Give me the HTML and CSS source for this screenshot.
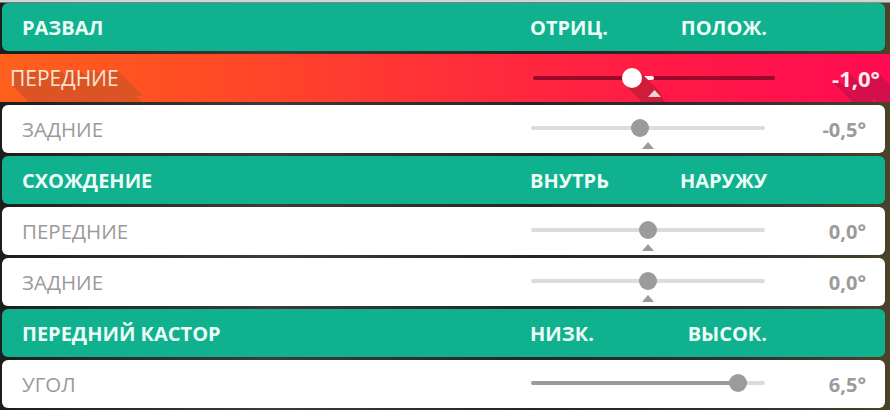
FILE: index.html
```html
<!DOCTYPE html>
<html lang="ru">
<head>
<meta charset="utf-8">
<title>Развал-схождение</title>
<link rel="stylesheet" href="styles.css">
</head>
<body>
<div class="panel">
  <div class="row head">
    <span class="name">РАЗВАЛ</span>
    <div class="cols"><span>ОТРИЦ.</span><span>ПОЛОЖ.</span></div>
  </div>
  <div class="row active">
    <span class="label">ПЕРЕДНИЕ</span>
    <div class="slider">
      <div class="track"></div>
      <div class="fill-white" style="left:40.9%;width:9.1%"></div>
      <div class="thumb" style="left:40.9%"></div>
      <svg class="marker" width="60" height="20" viewBox="0 0 60 20"><polygon points="6.5,0 13,7 26,20 13,20 0,7" fill="#d01a3a"/><polygon points="6.5,0 13,7 0,7" fill="#ead3d8"/></svg>
    </div>
    <span class="value">-1,0°</span>
  </div>
  <div class="row item">
    <span class="label">ЗАДНИЕ</span>
    <div class="slider">
      <div class="track"></div>
      <div class="thumb" style="left:46.6%"></div>
      <div class="tri"></div>
    </div>
    <span class="value">-0,5°</span>
  </div>
  <div class="row head">
    <span class="name">СХОЖДЕНИЕ</span>
    <div class="cols"><span>ВНУТРЬ</span><span>НАРУЖУ</span></div>
  </div>
  <div class="row item">
    <span class="label">ПЕРЕДНИЕ</span>
    <div class="slider">
      <div class="track"></div>
      <div class="thumb" style="left:50%"></div>
      <div class="tri"></div>
    </div>
    <span class="value">0,0°</span>
  </div>
  <div class="row item">
    <span class="label">ЗАДНИЕ</span>
    <div class="slider">
      <div class="track"></div>
      <div class="thumb" style="left:50%"></div>
      <div class="tri"></div>
    </div>
    <span class="value">0,0°</span>
  </div>
  <div class="row head">
    <span class="name">ПЕРЕДНИЙ КАСТОР</span>
    <div class="cols"><span>НИЗК.</span><span>ВЫСОК.</span></div>
  </div>
  <div class="row item">
    <span class="label">УГОЛ</span>
    <div class="slider">
      <div class="track"></div>
      <div class="fill-grey" style="width:88.5%"></div>
      <div class="thumb" style="left:88.5%"></div>
    </div>
    <span class="value">6,5°</span>
  </div>
</div>
</body>
</html>
```
FILE: styles.css
```css
* { box-sizing: border-box; }
html, body { margin: 0; padding: 0; }
body {
  width: 890px;
  height: 410px;
  overflow: hidden;
  font-family: "Open Sans", "Noto Sans", sans-serif;
  background:
    linear-gradient(180deg, #d4d4d4 0, #d4d4d4 2px, transparent 3px),
    linear-gradient(90deg, #1e1d1d 0%, #3e3a3a 30%, #262424 60%, #352f33 85%, #4a4228 100%);
}
.panel {
  display: flex;
  flex-direction: column;
  gap: 3px;
  padding-top: 3px;
}
.row {
  height: 48px;
  display: grid;
  align-items: center;
  overflow: hidden;
  position: relative;
}
.head {
  margin: 0 5px 0 2px;
  background: #10b18f;
  border-radius: 6px;
  grid-template-columns: 528px 237px 1fr;
  color: #ecfcf6;
  font-weight: 700;
  font-size: 20px;
}
.head .name { padding-left: 20px; }
.head .cols { display: flex; justify-content: space-between; }
.item {
  margin: 0 5px 0 2px;
  background: #ffffff;
  border-radius: 6px;
  grid-template-columns: 529px 234px 1fr;
}
.item .label {
  padding-left: 20px;
  color: #9a9a9a;
  font-size: 20.5px;
}
.item .value {
  text-align: right;
  padding-right: 19px;
  color: #9b9b9b;
  font-weight: 700;
  font-size: 20px;
}
.slider {
  position: relative;
  height: 48px;
}
.item .track {
  margin-top: 21px;
  height: 4px;
  border-radius: 2px;
  background: #dcdcdc;
}
.fill-grey {
  position: absolute;
  left: 0;
  top: 21px;
  height: 4px;
  border-radius: 2px;
  background: #9b9b9b;
}
.item .thumb {
  position: absolute;
  top: 14px;
  width: 18px;
  height: 18px;
  margin-left: -9px;
  border-radius: 50%;
  background: #9b9b9b;
}
.tri {
  position: absolute;
  left: 50%;
  top: 37px;
  margin-left: -6px;
  width: 0;
  height: 0;
  border-left: 6px solid transparent;
  border-right: 6px solid transparent;
  border-bottom: 7px solid #9b9b9b;
}

/* active row */
.active {
  background: linear-gradient(90deg, #ff601c 0%, #ff4a26 25%, #ff2b3c 55%, #ff1a46 75%, #ff0b52 100%);
  grid-template-columns: 533px 242px 1fr;
}
.active .label {
  padding-left: 10px;
  color: #f7e4d4;
  font-size: 21px;
  text-shadow: 1px 1px 0 #dc5424, 2px 2px 0 #dc5424, 3px 3px 0 #dc5424, 4px 4px 0 #dc5424,
    5px 5px 0 #dc5424, 6px 6px 0 #dc5424, 7px 7px 0 #dc5424, 8px 8px 0 #dc5424,
    9px 9px 0 #dc5424, 10px 10px 0 #dc5424, 11px 11px 0 #dc5424, 12px 12px 0 #dc5424,
    13px 13px 0 #dc5424, 14px 14px 0 #dc5424, 15px 15px 0 #dc5424, 16px 16px 0 #dc5424,
    17px 17px 0 #dc5424, 18px 18px 0 #dc5424, 19px 19px 0 #dc5424, 20px 20px 0 #dc5424,
    21px 21px 0 #dc5424, 22px 22px 0 #dc5424, 23px 23px 0 #dc5424, 24px 24px 0 #dc5424;
}
.active .value {
  text-align: right;
  padding-right: 10px;
  color: #ffe9ef;
  font-weight: 700;
  font-size: 22px;
  text-shadow: 1px 1px 0 #d3104a, 2px 2px 0 #d3104a, 3px 3px 0 #d3104a, 4px 4px 0 #d3104a,
    5px 5px 0 #d3104a, 6px 6px 0 #d3104a, 7px 7px 0 #d3104a, 8px 8px 0 #d3104a,
    9px 9px 0 #d3104a, 10px 10px 0 #d3104a, 11px 11px 0 #d3104a, 12px 12px 0 #d3104a,
    13px 13px 0 #d3104a, 14px 14px 0 #d3104a, 15px 15px 0 #d3104a, 16px 16px 0 #d3104a,
    17px 17px 0 #d3104a, 18px 18px 0 #d3104a, 19px 19px 0 #d3104a, 20px 20px 0 #d3104a,
    21px 21px 0 #d3104a, 22px 22px 0 #d3104a, 23px 23px 0 #d3104a, 24px 24px 0 #d3104a;
}
.active .track {
  margin-top: 22px;
  height: 4px;
  border-radius: 2px;
  background: #98092a;
}
.fill-white {
  position: absolute;
  top: 22px;
  height: 4px;
  background: #fff4f4;
  border-radius: 0 2px 2px 0;
}
.active .thumb {
  position: absolute;
  top: 14px;
  width: 20px;
  height: 20px;
  margin-left: -10px;
  border-radius: 50%;
  background: #ffffff;
  box-shadow: 1px 1px 0 #d21c3a, 2px 2px 0 #d21c3a, 3px 3px 0 #d21c3a, 4px 4px 0 #d21c3a,
    5px 5px 0 #d21c3a, 6px 6px 0 #d21c3a, 7px 7px 0 #d21c3a, 8px 8px 0 #d21c3a,
    9px 9px 0 #d21c3a, 10px 10px 0 #d21c3a, 11px 11px 0 #d21c3a, 12px 12px 0 #d21c3a,
    13px 13px 0 #d21c3a, 14px 14px 0 #d21c3a, 15px 15px 0 #d21c3a, 16px 16px 0 #d21c3a,
    17px 17px 0 #d21c3a, 18px 18px 0 #d21c3a, 19px 19px 0 #d21c3a, 20px 20px 0 #d21c3a;
}
.marker {
  position: absolute;
  left: 50%;
  top: 36px;
  margin-left: -6.5px;
  overflow: visible;
}
```
